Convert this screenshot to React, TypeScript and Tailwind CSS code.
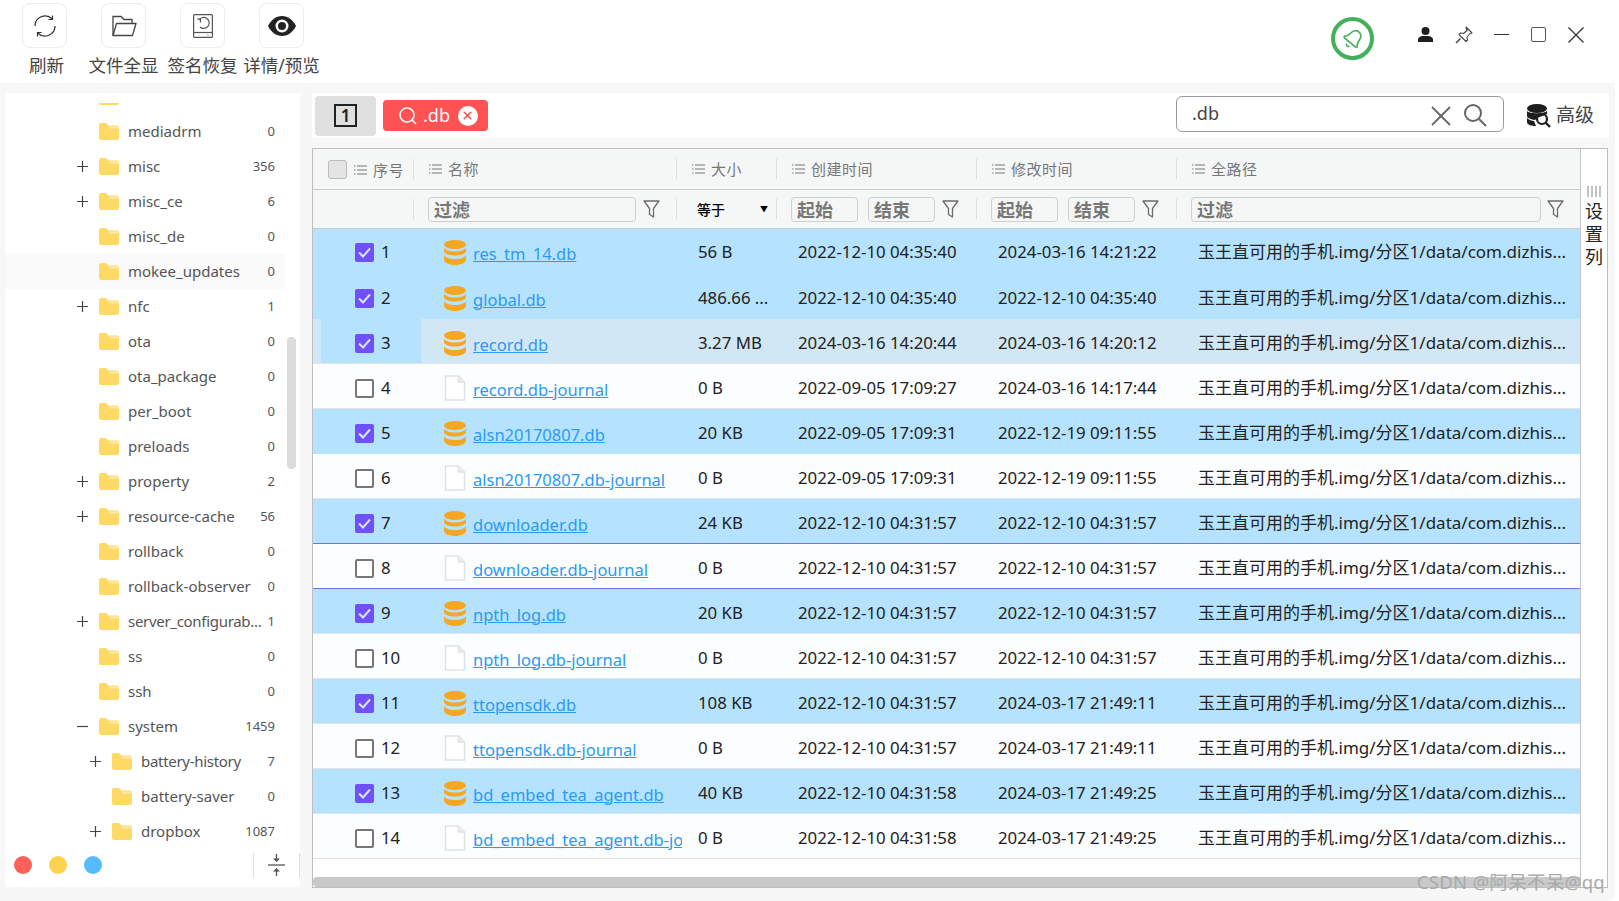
import React from 'react';
import { Bell, X } from 'lucide-react';

const FONT = '"Noto Sans", "Noto Sans CJK SC", sans-serif';
const PATH = '玉王直可用的手机.img/分区1/data/com.dizhis...';

const COLS = 'grid grid-cols-[100px_263px_100px_200px_200px_405px]';

type TreeItem = { name: string; count: string; level?: number; toggle?: '+' | '-'; hover?: boolean; tight?: boolean };

const TREE: TreeItem[] = [
  { name: '', count: '' },
  { name: 'mediadrm', count: '0' },
  { name: 'misc', count: '356', toggle: '+' },
  { name: 'misc_ce', count: '6', toggle: '+' },
  { name: 'misc_de', count: '0' },
  { name: 'mokee_updates', count: '0', hover: true },
  { name: 'nfc', count: '1', toggle: '+' },
  { name: 'ota', count: '0' },
  { name: 'ota_package', count: '0' },
  { name: 'per_boot', count: '0' },
  { name: 'preloads', count: '0' },
  { name: 'property', count: '2', toggle: '+' },
  { name: 'resource-cache', count: '56', toggle: '+' },
  { name: 'rollback', count: '0' },
  { name: 'rollback-observer', count: '0' },
  { name: 'server_configurab...', count: '1', toggle: '+', tight: true },
  { name: 'ss', count: '0' },
  { name: 'ssh', count: '0' },
  { name: 'system', count: '1459', toggle: '-' },
  { name: 'battery-history', count: '7', toggle: '+', level: 1, tight: true },
  { name: 'battery-saver', count: '0', level: 1 },
  { name: 'dropbox', count: '1087', toggle: '+', level: 1 },
];

type FileRow = { id: number; name: string; size: string; created: string; modified: string };

const ROWS: FileRow[] = [
  { id: 1, name: 'res_tm_14.db', size: '56 B', created: '2022-12-10 04:35:40', modified: '2024-03-16 14:21:22' },
  { id: 2, name: 'global.db', size: '486.66 ...', created: '2022-12-10 04:35:40', modified: '2022-12-10 04:35:40' },
  { id: 3, name: 'record.db', size: '3.27 MB', created: '2024-03-16 14:20:44', modified: '2024-03-16 14:20:12' },
  { id: 4, name: 'record.db-journal', size: '0 B', created: '2022-09-05 17:09:27', modified: '2024-03-16 14:17:44' },
  { id: 5, name: 'alsn20170807.db', size: '20 KB', created: '2022-09-05 17:09:31', modified: '2022-12-19 09:11:55' },
  { id: 6, name: 'alsn20170807.db-journal', size: '0 B', created: '2022-09-05 17:09:31', modified: '2022-12-19 09:11:55' },
  { id: 7, name: 'downloader.db', size: '24 KB', created: '2022-12-10 04:31:57', modified: '2022-12-10 04:31:57' },
  { id: 8, name: 'downloader.db-journal', size: '0 B', created: '2022-12-10 04:31:57', modified: '2022-12-10 04:31:57' },
  { id: 9, name: 'npth_log.db', size: '20 KB', created: '2022-12-10 04:31:57', modified: '2022-12-10 04:31:57' },
  { id: 10, name: 'npth_log.db-journal', size: '0 B', created: '2022-12-10 04:31:57', modified: '2022-12-10 04:31:57' },
  { id: 11, name: 'ttopensdk.db', size: '108 KB', created: '2022-12-10 04:31:57', modified: '2024-03-17 21:49:11' },
  { id: 12, name: 'ttopensdk.db-journal', size: '0 B', created: '2022-12-10 04:31:57', modified: '2024-03-17 21:49:11' },
  { id: 13, name: 'bd_embed_tea_agent.db', size: '40 KB', created: '2022-12-10 04:31:58', modified: '2024-03-17 21:49:25' },
  { id: 14, name: 'bd_embed_tea_agent.db-journal', size: '0 B', created: '2022-12-10 04:31:58', modified: '2024-03-17 21:49:25' },
];

const Folder = () => (
  <svg width="20" height="17" viewBox="0 0 20 17" className="shrink-0">
    <path d="M0 2a2 2 0 0 1 2-2h5l2.500 2.500H18a2 2 0 0 1 2 2V15a2 2 0 0 1-2 2H2a2 2 0 0 1-2-2z" fill="#ffd966" />
    <rect x="10" y="3.500" width="10" height="2" fill="#ffe9a8" />
  </svg>
);

const MenuIcon = () => (
  <svg width="13" height="10" viewBox="0 0 13 10" className="shrink-0" stroke="#777" strokeWidth="1.200">
    <path d="M0 1h1.500M3 1h10M0 5h1.500M3 5h10M0 9h1.500M3 9h10" />
  </svg>
);

const Funnel = () => (
  <svg width="17" height="18" viewBox="0 0 17 18" fill="none" stroke="#6b6b6b" strokeWidth="1.300" className="shrink-0">
    <path d="M1 1h15l-5.500 7.500V17l-4-2.500v-6z" strokeLinejoin="round" />
  </svg>
);

const DbIcon = () => (
  <svg width="22" height="25" viewBox="0 0 22 25" fill="#f5a623" className="shrink-0">
    <ellipse cx="11" cy="4.500" rx="11" ry="4.500" />
    <path d="M0 7.500c1 2.500 5.500 4 11 4s10-1.500 11-4v3.500c0 2.500-5 4.500-11 4.500S0 13.500 0 11z" />
    <path d="M0 15c1 2.500 5.500 4 11 4s10-1.500 11-4v4.500c0 3-5 5.500-11 5.500S0 22.500 0 19.500z" />
  </svg>
);

const FileIcon = () => (
  <svg width="22" height="26" viewBox="0 0 22 26" fill="#fff" stroke="#dfe2e5" strokeWidth="1.500" className="shrink-0">
    <path d="M1.500 1h13l6 6v18h-19z" />
    <path d="M14.500 1v6h6" fill="#eceef0" />
  </svg>
);

const CheckBox = ({ checked }: { checked: boolean }) =>
  checked ? (
    <span className="flex h-[19px] w-[19px] shrink-0 items-center justify-center rounded-[2px] bg-[#6f50fb]">
      <svg width="13" height="11" viewBox="0 0 13 11" fill="none" stroke="#d8e6ff" strokeWidth="2">
        <path d="M1 5.500l4 4 7-8" />
      </svg>
    </span>
  ) : (
    <span className="h-[19px] w-[19px] shrink-0 rounded-[2px] border-2 border-[#777] bg-white" />
  );

const ToolButton = ({ label, labelClass, children }: { label: string; labelClass?: string; children: React.ReactNode }) => (
  <div className="flex w-[79px] flex-col items-center whitespace-nowrap">
    <div className="flex h-[45px] w-[45px] items-center justify-center rounded-lg border border-[#ececec] bg-white">
      {children}
    </div>
    <span className={`mt-[4px] text-[17.500px] leading-[26px] text-[#444] ${labelClass ?? ''}`}>{label}</span>
  </div>
);

const HeaderCell = ({ label }: { label: string }) => (
  <div className="flex items-center">
    <span className="h-[20px] w-px bg-[#dcdfe0]" />
    <div className="ml-[15px] flex items-center gap-[6px]">
      <MenuIcon />
      <span className="text-[15px] tracking-[0.5px] text-[#777]">{label}</span>
    </div>
  </div>
);

const FilterBox = ({ label, className }: { label: string; className: string }) => (
  <div className={`flex h-[25px] items-center rounded border border-[#cfcfcf] pl-[5px] pt-[2px] text-[18px] font-bold text-[#777] ${className}`}>
    {label}
  </div>
);

const Sep = () => <span className="h-[20px] w-px shrink-0 bg-[#dcdfe0]" />;

const Tree = () => (
  <div className="h-[750px] overflow-hidden">
    <div className="-mt-[24px]">
      {TREE.map((t, i) => (
        <div
          key={i}
          className={`mr-[15px] flex h-[35px] items-center text-[15px] text-[#555] ${t.level ? 'pl-[84px]' : 'pl-[71px]'} ${t.hover ? 'bg-[#fafafa]' : ''}`}
        >
          <span className="flex w-[23px] shrink-0 justify-start pl-[1px]">
            {t.toggle === '+' && (
              <svg width="11" height="11" viewBox="0 0 11 11" stroke="#444" strokeWidth="1.200">
                <path d="M0 5.500h11M5.500 0v11" />
              </svg>
            )}
            {t.toggle === '-' && (
              <svg width="11" height="11" viewBox="0 0 11 11" stroke="#444" strokeWidth="1.200">
                <path d="M0 5.500h11" />
              </svg>
            )}
          </span>
          <Folder />
          <span className={`ml-[9px] flex-1 whitespace-nowrap ${t.tight ? 'tracking-[-0.3px]' : ''}`}>{t.name}</span>
          <span className="ml-1 pr-[10px] text-[13px] text-[#555]">{t.count}</span>
        </div>
      ))}
    </div>
  </div>
);

export default function App() {
  return (
    <div className="relative flex h-[901px] w-[1619px] flex-col overflow-hidden bg-white" style={{ fontFamily: FONT }}>
      {/* toolbar */}
      <div className="flex h-[83px] w-[1615px] shrink-0 items-start bg-white pl-[5px] pt-[3px]">
        <ToolButton label="刷新" labelClass="translate-x-[2px]">
          <svg width="24" height="24" viewBox="0 0 24 24" fill="none" stroke="#333" strokeWidth="1.300">
            <path d="M2 12a10 10 0 0 1 17-7.200M22 12a10 10 0 0 1-17 7.200" />
            <path d="M19.500 1.500v4h-4M4.500 22.500v-4h4" strokeWidth="1.200" />
          </svg>
        </ToolButton>
        <ToolButton label="文件全显">
          <svg width="26" height="22" viewBox="0 0 26 22" fill="none" stroke="#444" strokeWidth="1.300">
            <path d="M2 20.500V1.500h8l3 3h8v4" />
            <path d="M2 20.500l3.500-12h19.500l-3.500 12z" strokeLinejoin="round" />
          </svg>
        </ToolButton>
        <ToolButton label="签名恢复">
          <svg width="20" height="24" viewBox="0 0 20 24" fill="none" stroke="#555" strokeWidth="1.200">
            <rect x="0.600" y="0.600" width="18.800" height="22.800" rx="1" />
            <path d="M0.600 18.500h18.800" />
            <path d="M15.500 21h-1" />
            <path d="M6 6a5.500 5.500 0 1 1 1 7" />
            <path d="M4 5h3.500v3.500" />
          </svg>
        </ToolButton>
        <ToolButton label="详情/预览">
          <svg width="28" height="20" viewBox="0 0 28 20">
            <path d="M0 10C3 4 8 0 14 0s11 4 14 10c-3 6-8 10-14 10S3 16 0 10z" fill="#222" />
            <circle cx="14" cy="10" r="6.500" fill="#fff" />
            <circle cx="14" cy="10" r="4" fill="#222" />
          </svg>
        </ToolButton>
        <div className="ml-auto flex items-center pt-[14px]">
          <div className="flex h-[43px] w-[43px] items-center justify-center rounded-full border-[4px] border-[#43b05c]">
            <Bell size={22} color="#43b05c" strokeWidth={1.8} className="rotate-[40deg]" />
          </div>
          <div className="ml-[44px] flex items-center pb-[8px]">
            <svg width="15" height="15" viewBox="0 0 15 15" fill="#1e1e1e">
              <circle cx="7.500" cy="4" r="4" />
              <path d="M0 15v-2.500c0-2 3-3.500 5-3.500h5c2 0 5 1.500 5 3.500V15z" />
            </svg>
            <svg className="ml-[22px]" width="18" height="18" viewBox="0 0 18 18" fill="none" stroke="#444" strokeWidth="1.100" strokeLinejoin="round">
              <path d="M11 1l6 6-2 0.500-3 3.500 0.500 3-1.500 1.500-7-7 1.500-1.500 3 0.500 3.500-3z" />
              <path d="M5.500 12.500L1 17" strokeWidth="1.400" />
            </svg>
            <span className="ml-[21px] h-[1.500px] w-[15px] bg-[#333]" />
            <span className="ml-[22px] h-[15px] w-[15px] rounded-[2px] border border-[#555]" />
            <svg className="ml-[22px]" width="16" height="16" viewBox="0 0 16 16" stroke="#333" strokeWidth="1.300">
              <path d="M0.500 0.500l15 15M15.500 0.500l-15 15" />
            </svg>
          </div>
          <div className="w-[31px]" />
        </div>
      </div>

      {/* body */}
      <div className="flex h-[818px] w-[1615px] gap-[12px] rounded-br-lg bg-[#f7f7f7] pl-[5px] pt-[10px]">
        {/* left tree */}
        <aside className="relative flex h-[794px] w-[295px] flex-col bg-white pt-[10px]">
          <Tree />
          <div className="absolute right-[4px] top-[244px] h-[132px] w-[9px] rounded bg-[#dcdcdc]" />
          <div className="flex h-[24px] items-center pl-[9px]">
            <span className="h-[18px] w-[18px] rounded-full bg-[#ff6159]" />
            <span className="ml-[17px] h-[18px] w-[18px] rounded-full bg-[#ffd24d]" />
            <span className="ml-[17px] h-[18px] w-[18px] rounded-full bg-[#55bbfb]" />
            <span className="ml-auto h-[24px] w-px bg-[#dedede]" />
            <svg className="mx-[14px]" width="17" height="24" viewBox="0 0 17 24" stroke="#555" strokeWidth="1.300" fill="#555">
              <path d="M0 12h17" />
              <path d="M8.500 1v5M8.500 18v5" />
              <path d="M5 5.500h7l-3.500 3.500zM5 18.500h7L8.500 15z" stroke="none" />
            </svg>
            <span className="h-[24px] w-px bg-[#dedede]" />
          </div>
        </aside>

        {/* right side */}
        <main className="flex w-[1297px] flex-col">
          <div className="flex h-[45px] shrink-0 items-center bg-white pl-[3px]">
            <div className="flex h-[40px] w-[61px] items-center justify-center rounded bg-[#e0e0e0]">
              <span className="flex h-[23px] w-[23px] items-center justify-center border-[2.500px] border-[#222] text-[17px] font-semibold leading-none text-[#222]">
                1
              </span>
            </div>
            <div className="ml-[7px] flex h-[31px] w-[105px] items-center rounded bg-[#ff5353] pl-[16px] text-white">
              <svg width="18" height="18" viewBox="0 0 18 18" fill="none" stroke="#fff" strokeWidth="1.600">
                <circle cx="8" cy="8" r="7" />
                <path d="M13 13l4 4" />
              </svg>
              <span className="ml-[6px] text-[18px]">.db</span>
              <span className="ml-[8px] flex h-[20px] w-[20px] items-center justify-center rounded-full bg-white">
                <X size={13} color="#ff5353" strokeWidth={3} />
              </span>
            </div>
            <div className="-mt-[3px] ml-auto flex h-[36px] w-[328px] items-center rounded-md border border-[#9a9a9a] pl-[15px] text-[18px] text-[#444]">
              <span className="pb-[2px]">.db</span>
              <svg className="ml-auto mt-[3px]" width="20" height="20" viewBox="0 0 20 20" stroke="#666" strokeWidth="1.800">
                <path d="M1 1l18 18M19 1L1 19" />
              </svg>
              <svg className="ml-[12px] mr-[16px] mt-[2px]" width="24" height="24" viewBox="0 0 24 24" fill="none" stroke="#666" strokeWidth="2">
                <circle cx="10" cy="10" r="8" />
                <path d="M16 16l7 7" />
              </svg>
            </div>
            <div className="ml-[23px] flex w-[82px] items-center">
              <svg width="24" height="24" viewBox="0 0 24 24">
                <ellipse cx="10" cy="4.500" rx="10" ry="4.500" fill="#1e1e1e" />
                <path d="M0 7c2 3 17 3 20 0v3c-6 3-8 2-12 6-4-.5-8-2-8-4zM0 14c2 2 5 3 7 3l2 5c-4 0-9-1-9-4z" fill="#1e1e1e" />
                <circle cx="15" cy="15" r="5" fill="none" stroke="#1e1e1e" strokeWidth="2.200" />
                <path d="M18.500 18.500l4.500 4.500" stroke="#1e1e1e" strokeWidth="2.400" />
              </svg>
              <span className="ml-[5px] text-[19px] text-[#444]">高级</span>
            </div>
          </div>

          <div className="mt-[10px] flex h-[740px] w-[1296px] border border-[#bcc0c2] bg-white">
            <div className="flex w-[1268px] flex-col border-r border-[#c4c4c4]">
              {/* header */}
              <div className={`${COLS} h-[41px] shrink-0 border-b border-[#c8cbcc] bg-[#f5f7f7]`}>
                <div className="flex items-center pl-[15px]">
                  <span className="h-[19px] w-[19px] rounded-[3px] border border-[#bbb] bg-[#e4e4e4]" />
                  <span className="ml-[7px] pt-[2px]"><MenuIcon /></span>
                  <span className="ml-[6px] pt-[2px] text-[15px] tracking-[0.5px] text-[#777]">序号</span>
                </div>
                <HeaderCell label="名称" />
                <HeaderCell label="大小" />
                <HeaderCell label="创建时间" />
                <HeaderCell label="修改时间" />
                <HeaderCell label="全路径" />
              </div>
              {/* filters */}
              <div className={`${COLS} h-[39px] shrink-0 border-b border-[#c8cbcc] bg-[#f5f7f7]`}>
                <div />
                <div className="flex items-center">
                  <Sep />
                  <FilterBox label="过滤" className="ml-[14px] w-[208px]" />
                  <span className="ml-[7px]"><Funnel /></span>
                </div>
                <div className="flex items-center">
                  <Sep />
                  <span className="ml-[20px] text-[14px] font-medium text-black">等于</span>
                  <span className="ml-[35px] text-[8px] text-black">▼</span>
                </div>
                <div className="flex items-center">
                  <Sep />
                  <FilterBox label="起始" className="ml-[14px] w-[67px]" />
                  <FilterBox label="结束" className="ml-[10px] w-[67px]" />
                  <span className="ml-[7px]"><Funnel /></span>
                </div>
                <div className="flex items-center">
                  <Sep />
                  <FilterBox label="起始" className="ml-[14px] w-[67px]" />
                  <FilterBox label="结束" className="ml-[10px] w-[67px]" />
                  <span className="ml-[7px]"><Funnel /></span>
                </div>
                <div className="flex items-center">
                  <Sep />
                  <FilterBox label="过滤" className="ml-[14px] w-[350px]" />
                  <span className="ml-[6px]"><Funnel /></span>
                </div>
              </div>
              {/* rows */}
              <div>
                {ROWS.map(r => {
                  const db = r.id % 2 === 1 || r.id === 2;
                  const focused = r.id === 3;
                  const bg = focused ? 'bg-[#d2e7f5]' : db ? 'bg-[#b5e3ff]' : 'bg-[#fcfdff]';
                  const line = r.id === 7 || r.id === 8 ? 'border-[#7a6cf5]' : 'border-[#e3e3e3]';
                  const shift = r.id === 1 ? 'pt-[2px]' : 'pt-[4px]';
                  return (
                    <div key={r.id} className={`${COLS} h-[45px] border-b text-[16.800px] text-[#222] ${bg} ${db && !focused && r.id < 7 ? 'border-transparent' : line}`}>
                      <div className={`flex items-center ${shift} ${focused ? 'ml-[8px] w-[100px] bg-[#b5e3ff] pl-[34px]' : 'pl-[42px]'}`}>
                        <CheckBox checked={db} />
                        <span className="ml-[7px]">{r.id}</span>
                      </div>
                      <div className={`-mr-[6px] flex items-center overflow-hidden pl-[31px] ${shift}`}>
                        {db ? <DbIcon /> : <FileIcon />}
                        <a className="ml-[7px] translate-y-[2px] whitespace-nowrap text-[16.500px] text-[#2b9af3] underline">{r.name}</a>
                      </div>
                      <div className={`flex items-center whitespace-nowrap pl-[22px] ${shift}`}>{r.size}</div>
                      <div className={`flex items-center whitespace-nowrap pl-[22px] ${shift}`}>{r.created}</div>
                      <div className={`flex items-center whitespace-nowrap pl-[22px] ${shift}`}>{r.modified}</div>
                      <div className={`flex items-center whitespace-nowrap pl-[22px] text-[17px] ${shift}`}>{PATH}</div>
                    </div>
                  );
                })}
              </div>
              <div className="flex-1" />
              <div className="h-[10px] shrink-0 rounded-l bg-[#c9c9c9]" />
            </div>
            {/* side panel */}
            <div className="flex flex-1 flex-col items-center pt-[37px] text-[18px] leading-[23px] text-[#222]">
              <svg width="15" height="11" viewBox="0 0 15 11" stroke="#999" strokeWidth="1.200" className="mb-[3px]">
                <path d="M1 0v11M5 0v11M9 0v11M13 0v11" />
              </svg>
              <span>设</span>
              <span>置</span>
              <span>列</span>
            </div>
          </div>
        </main>
      </div>

      {/* watermark */}
      <div className="absolute bottom-[7px] right-[14px] whitespace-nowrap text-[18.500px] leading-[24px] tracking-[0.3px] text-[#aaa]">
        CSDN @阿呆不呆@qq
      </div>
    </div>
  );
}
